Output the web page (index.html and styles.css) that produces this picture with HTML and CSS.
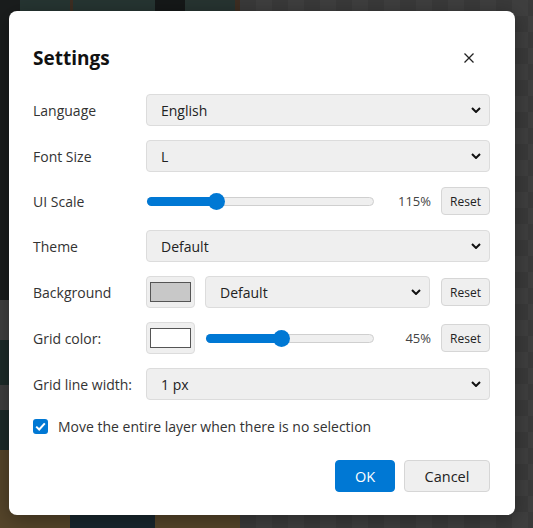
FILE: index.html
```html
<!doctype html>
<html lang="en">
<head>
    <meta charset="utf-8">
    <title>Settings</title>
    <link rel="stylesheet" href="styles.css">
</head>
<body>
    <div class="backdrop">
        <div class="scene">
            <div class="band b1"></div>
            <div class="band b2"></div>
            <div class="band b3"></div>
            <div class="band b4"></div>
        </div>
        <div class="checker"></div>
    </div>

    <div class="dialog">
        <div class="dialog-header">
            <h2>Settings</h2>
            <button class="close-btn" aria-label="Close">
                <svg width="12" height="12" viewBox="0 0 12 12"><path d="M1.5 1.5 L10.5 10.5 M10.5 1.5 L1.5 10.5" stroke="#222" stroke-width="1.3"/></svg>
            </button>
        </div>

        <div class="form">
            <div class="row">
                <label>Language</label>
                <div class="select grow"><span>English</span><svg class="chev" viewBox="0 0 10 6"><path d="M1 1 L5 5 L9 1" fill="none" stroke="#111" stroke-width="2"/></svg></div>
            </div>
            <div class="row">
                <label>Font Size</label>
                <div class="select grow"><span>L</span><svg class="chev" viewBox="0 0 10 6"><path d="M1 1 L5 5 L9 1" fill="none" stroke="#111" stroke-width="2"/></svg></div>
            </div>
            <div class="row short">
                <label>UI Scale</label>
                <div class="slider wide"><div class="fill" style="width: 31%"><span class="thumb"></span></div></div>
                <span class="pct">115%</span>
                <button class="btn small">Reset</button>
            </div>
            <div class="row">
                <label>Theme</label>
                <div class="select grow"><span>Default</span><svg class="chev" viewBox="0 0 10 6"><path d="M1 1 L5 5 L9 1" fill="none" stroke="#111" stroke-width="2"/></svg></div>
            </div>
            <div class="row">
                <label>Background</label>
                <div class="swatch"><span class="chip gray"></span></div>
                <div class="select bg-select"><span>Default</span><svg class="chev" viewBox="0 0 10 6"><path d="M1 1 L5 5 L9 1" fill="none" stroke="#111" stroke-width="2"/></svg></div>
                <button class="btn small">Reset</button>
            </div>
            <div class="row">
                <label>Grid color:</label>
                <div class="swatch"><span class="chip white"></span></div>
                <div class="slider narrow"><div class="fill" style="width: 46%"><span class="thumb"></span></div></div>
                <span class="pct">45%</span>
                <button class="btn small">Reset</button>
            </div>
            <div class="row">
                <label>Grid line width:</label>
                <div class="select grow"><span>1 px</span><svg class="chev" viewBox="0 0 10 6"><path d="M1 1 L5 5 L9 1" fill="none" stroke="#111" stroke-width="2"/></svg></div>
            </div>
        </div>

        <div class="check-row">
            <span class="checkbox"><svg width="11" height="9" viewBox="0 0 11 9"><path d="M1.2 4.6 L4.2 7.5 L9.8 1.3" fill="none" stroke="#fff" stroke-width="2"/></svg></span>
            <span>Move the entire layer when there is no selection</span>
        </div>

        <div class="footer">
            <button class="btn primary">OK</button>
            <button class="btn cancel">Cancel</button>
        </div>
    </div>
</body>
</html>
```

FILE: styles.css
```css
body {
    margin: 0;
    width: 533px;
    height: 528px;
    overflow: hidden;
    font-family: "Open Sans", "Noto Sans", sans-serif;
    font-size: 14px;
    color: #333;
}
.backdrop {
    display: grid;
    grid-template-columns: 240px 1fr;
    height: 528px;
}
.scene {
    display: grid;
    grid-template-rows: 50px 250px 150px 1fr;
    background: #1d2020;
}
.band.b1 {
    background: linear-gradient(90deg, #1a1d1d 0 20px, #263532 20px 70px, #3e2e22 70px 73px, #263532 73px 155px, #151818 155px 185px, #273431 185px 235px, #3e2e22 235px);
}
.band.b2 {
    background: #191c1c;
}
.band.b3 {
    background: linear-gradient(180deg, #404040 0 40px, #1d2b29 40px 85px, #3e3e3e 85px 110px, #1c2a28 110px);
}
.band.b4 {
    background: linear-gradient(90deg, #55452a 0 70px, #19272e 70px 155px, #55452a 155px);
}
.checker {
    background-color: #3a3a3a;
    background-image:
        linear-gradient(45deg, #3f3f3f 25%, transparent 25%, transparent 75%, #3f3f3f 75%),
        linear-gradient(45deg, #3f3f3f 25%, transparent 25%, transparent 75%, #3f3f3f 75%);
    background-size: 32px 32px;
    background-position: 0 0, 16px 16px;
}

.dialog {
    position: absolute;
    top: 11px;
    left: 9px;
    width: 506px;
    height: 504px;
    box-sizing: border-box;
    padding: 33px 25px 22px 24px;
    background: #fff;
    border-radius: 8px;
    box-shadow: 0 4px 20px rgba(0,0,0,0.35);
    display: flex;
    flex-direction: column;
}
.dialog-header {
    display: flex;
    align-items: center;
    justify-content: space-between;
    height: 28px;
    margin-bottom: 22px;
}
.dialog-header h2 {
    margin: 0;
    font-size: 19px;
    font-weight: bold;
    color: #111;
}
.close-btn {
    background: none;
    border: none;
    padding: 0;
    margin-right: 14px;
    width: 14px;
    height: 14px;
    display: flex;
    align-items: center;
    justify-content: center;
}

.form {
    display: flex;
    flex-direction: column;
    gap: 14px;
}
.row {
    display: flex;
    align-items: center;
    height: 32px;
}
.row.short {
    height: 30px;
}
.row label {
    width: 113px;
    flex: none;
}
.select {
    height: 32px;
    box-sizing: border-box;
    border: 1px solid #dcdcdc;
    border-radius: 4px;
    background: #efefef;
    display: flex;
    align-items: center;
    justify-content: space-between;
    padding: 0 8px 0 14px;
    color: #222;
}
.select.grow {
    flex: 1;
}
.select.bg-select {
    width: 225px;
    margin: 0 11px 0 10px;
}
.chev {
    width: 10px;
    height: 6px;
}
.swatch {
    width: 49px;
    height: 32px;
    box-sizing: border-box;
    border: 1px solid #dcdcdc;
    border-radius: 4px;
    background: #efefef;
    display: flex;
    align-items: center;
    justify-content: center;
    flex: none;
}
.chip {
    width: 41px;
    height: 20px;
    box-sizing: border-box;
    border: 1px solid #555;
}
.chip.gray {
    background: #c8c8c8;
}
.chip.white {
    background: #fff;
}

.slider {
    height: 9px;
    box-sizing: border-box;
    border: 1px solid #cfcfcf;
    border-radius: 5px;
    background: #efefef;
    margin-left: 1px;
}
.slider.wide {
    width: 227px;
}
.slider.narrow {
    width: 168px;
    margin-left: 11px;
}
.fill {
    position: relative;
    height: 9px;
    margin: -1px 0 0 -1px;
    background: #0078d4;
    border-radius: 5px;
}
.thumb {
    position: absolute;
    right: -8px;
    top: -4px;
    width: 17px;
    height: 17px;
    border-radius: 50%;
    background: #0078d4;
}
.pct {
    flex: 1;
    text-align: right;
    padding-right: 10px;
    color: #444;
    font-size: 13px;
}
.btn {
    font-family: inherit;
    border: 1px solid #d6d6d6;
    border-radius: 4px;
    background: #efefef;
    color: #222;
    padding: 0;
}
.btn.small {
    width: 49px;
    height: 28px;
    font-size: 12px;
    flex: none;
}

.check-row {
    display: flex;
    align-items: center;
    gap: 10px;
    margin-top: 16px;
    height: 20px;
    color: #333;
}
.checkbox {
    width: 15px;
    height: 15px;
    border-radius: 3px;
    background: #0078d4;
    display: flex;
    align-items: center;
    justify-content: center;
}

.footer {
    display: flex;
    justify-content: flex-end;
    gap: 9px;
    margin-top: 24px;
}
.btn.primary {
    width: 60px;
    height: 32px;
    background: #0078d4;
    border-color: #0078d4;
    color: #fff;
    font-size: 14.5px;
}
.btn.cancel {
    width: 86px;
    height: 32px;
    font-size: 14.5px;
}
```
